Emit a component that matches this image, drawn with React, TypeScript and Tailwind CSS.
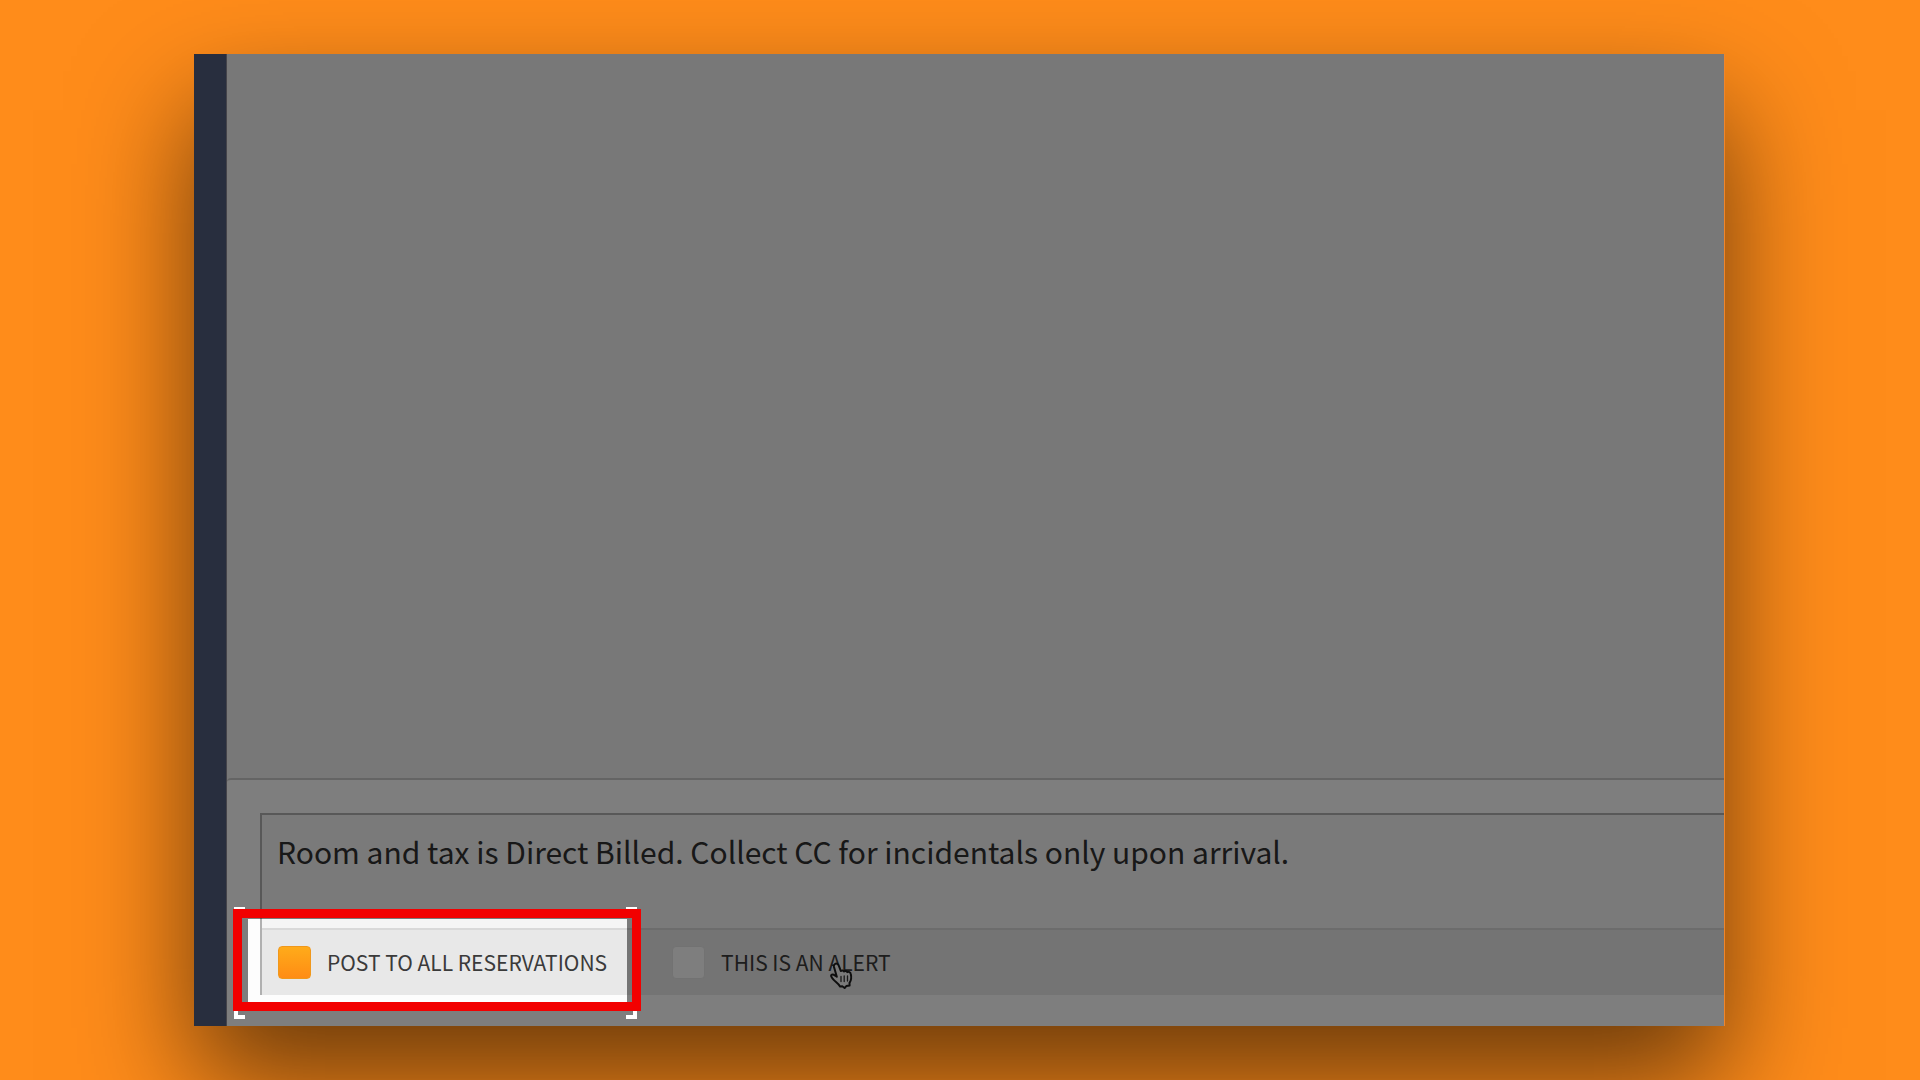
import { useState } from 'react'

interface NoteCheckboxProps {
    id: string
    label: string
    checked: boolean
    onChange: (checked: boolean) => void
}

function NoteCheckbox({ id, label, checked, onChange }: NoteCheckboxProps) {
    return (
        <div className="flex items-center gap-4">
            <input
                id={id}
                type="checkbox"
                checked={checked}
                onChange={(e) => onChange(e.target.checked)}
                className="size-[33px] shrink-0 appearance-none rounded-sm border border-[#e4e4e4] bg-[#fcfcfc] checked:border-[#f0981c] checked:bg-linear-to-b checked:from-[#ffab1a] checked:to-[#ff8c14]"
            />
            <label htmlFor={id} className="pb-0.5 text-[21px] leading-8 whitespace-nowrap text-[#3a3a3a]">
                {label}
            </label>
        </div>
    )
}

/** Dims everything in the window except the option it surrounds, and frames that option in red. */
function Spotlight() {
    return (
        <div className="pointer-events-none" aria-hidden="true">
            <div className="absolute -top-[11px] right-0 -bottom-[7px] -left-[14px] z-10 shadow-[0_0_0_2400px_rgba(0,0,0,0.5)]" />
            <div className="absolute -top-[23px] -right-[10px] -bottom-6 -left-7 z-20">
                <span className="absolute top-0 left-0 h-2 w-[11px] border-t-4 border-l-4 border-white" />
                <span className="absolute top-0 right-0 h-2 w-[11px] border-t-4 border-r-4 border-white" />
                <span className="absolute bottom-0 left-0 h-2 w-[11px] border-b-4 border-l-4 border-white" />
                <span className="absolute right-0 bottom-0 h-2 w-[11px] border-r-4 border-b-4 border-white" />
            </div>
            <div className="absolute -top-[21px] -right-[14px] -bottom-4 -left-[29px] z-20 border-9 border-[#f20000]" />
        </div>
    )
}

function HandCursor() {
    return (
        <svg
            viewBox="0 0 26 30"
            className="pointer-events-none absolute right-[36px] bottom-1 h-[30px] w-[26px]"
            strokeLinecap="round"
            strokeLinejoin="round"
            aria-hidden="true"
        >
            <path
                d="M6 3c1.500-1 3.200 0 3.700 1.500l2.100 5.500c.9-.9 2.700-.7 3.300.4 1-.8 2.700-.5 3.200.7 1.300-.6 3.200 0 3.500 1.800.8 3.400.3 6.600-1.300 9l.1 2.600-3.300.6-1.700 1.900-2.300-1.700-2.200.2c-1.500-2.600-4.200-4.200-6.400-6.600-1.100-1.200-2.700-3-2.600-4.200.2-1.500 2.400-1.500 3.700-.3l2 1.300L5 6c-.3-1.200 0-2.300 1-3z"
                fill="#f4f4f4"
                stroke="#1c1c1c"
                strokeWidth="2"
            />
            <path d="M12 15.500v5M15.200 15v5.500M18.500 15v5" fill="none" stroke="#333" strokeWidth="1.300" />
        </svg>
    )
}

export default function App() {
    const [note, setNote] = useState('Room and tax is Direct Billed. Collect CC for incidentals only upon arrival.')
    const [postToAll, setPostToAll] = useState(true)
    const [isAlert, setIsAlert] = useState(false)

    return (
        <div className="flex h-screen overflow-hidden bg-[#ff8c1a] py-[54px] pr-[195px] pl-[194px] font-['Noto_Sans_CJK_SC','Noto_Sans',sans-serif]">
            <div className="flex flex-1 shadow-[0_56px_108px_rgba(0,0,0,0.58)]">
                <div className="flex min-w-0 flex-1 overflow-hidden">
                    <aside className="w-[33px] shrink-0 border-r border-[#8a8894] bg-[#505c7c]" />
                    <main className="flex min-w-0 flex-1 flex-col bg-[#f1f1f1]">
                        <section className="flex-1" />
                        <form className="rounded-tl border-t-2 border-[#c9c9c9] bg-[#fdfdfd] pt-[33px] pb-[31px] pl-[33px]">
                            <div className="border-t-2 border-l-2 border-[#b0b0b0]">
                                <textarea
                                    aria-label="Note"
                                    value={note}
                                    onChange={(e) => setNote(e.target.value)}
                                    className="block h-[113px] w-full resize-none bg-[#f5f5f5] px-[15px] pt-3.5 text-[30px] leading-[44px] text-[#303030] outline-none"
                                />
                                <div className="flex h-[67px] border-t-2 border-[#d9d9d9] bg-[#e8e8e8]">
                                    <div className="relative flex items-center pr-5 pl-4">
                                        <NoteCheckbox
                                            id="post-to-all"
                                            label="POST TO ALL RESERVATIONS"
                                            checked={postToAll}
                                            onChange={setPostToAll}
                                        />
                                        <Spotlight />
                                    </div>
                                    <div className="relative ml-[45px] flex items-center">
                                        <NoteCheckbox
                                            id="is-alert"
                                            label="THIS IS AN ALERT"
                                            checked={isAlert}
                                            onChange={setIsAlert}
                                        />
                                        <HandCursor />
                                    </div>
                                </div>
                            </div>
                        </form>
                    </main>
                </div>
                <div className="w-px bg-[#f0862a]" />
            </div>
        </div>
    )
}
